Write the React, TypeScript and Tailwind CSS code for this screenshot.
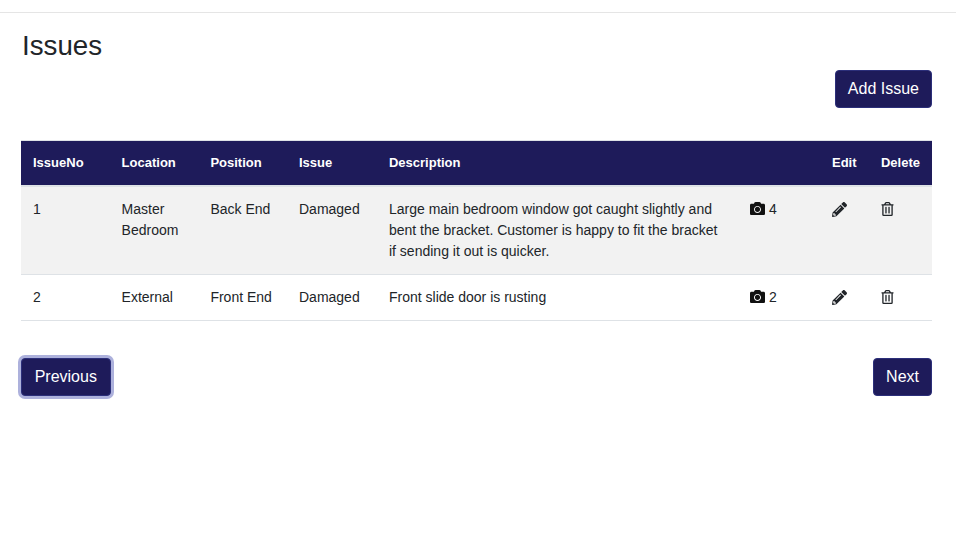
import React from 'react';
import { FaCamera, FaPencilAlt, FaRegTrashAlt } from 'react-icons/fa';

const issues = [
  {
    no: 1,
    location: 'Master Bedroom',
    position: 'Back End',
    issue: 'Damaged',
    description: 'Large main bedroom window got caught slightly and bent the bracket. Customer is happy to fit the bracket if sending it out is quicker.',
    photos: 4,
  },
  {
    no: 2,
    location: 'External',
    position: 'Front End',
    issue: 'Damaged',
    description: 'Front slide door is rusting',
    photos: 2,
  },
];

const btn = 'h-[38px] px-3 rounded border border-[#2c2f7a] bg-[#1e1b5a] text-white text-base';
const th = 'px-3 pt-[11px] pb-3 text-left font-bold border-t border-[#dee2e6]';

export default function App() {
  return (
    <div className="min-h-[536px] bg-white text-[#212529] font-['Liberation_Sans',Arial,sans-serif]">
      <div className="h-[13px] border-b border-[#e5e5e5]" />
      <div className="pl-[21px] pr-6">
        <h1 className="pt-[14px] pl-px text-[27.7px] leading-[38px] font-normal">Issues</h1>
        <div className="mt-[5px] flex justify-end">
          <button className={btn}>Add Issue</button>
        </div>
        <table className="mt-8 w-[911px] table-fixed border-collapse text-sm leading-[21px]">
          <colgroup>
            <col className="w-[88.6px]" />
            <col className="w-[88.8px]" />
            <col className="w-[88.6px]" />
            <col className="w-[90px]" />
            <col className="w-[361px]" />
            <col className="w-[82px]" />
            <col className="w-[49px]" />
            <col className="w-[63px]" />
          </colgroup>
          <thead>
            <tr className="bg-[#1e1b5a] text-white text-[13px] border-b-2 border-[#dee2e6]">
              <th className={th}>IssueNo</th>
              <th className={th}>Location</th>
              <th className={th}>Position</th>
              <th className={th}>Issue</th>
              <th className={th}>Description</th>
              <th className={th} />
              <th className={th}>Edit</th>
              <th className={th}>Delete</th>
            </tr>
          </thead>
          <tbody>
            {issues.map((row, i) => (
              <tr key={row.no} className={`border-b border-[#dee2e6] ${i % 2 === 0 ? 'bg-[#f2f2f2]' : 'bg-white'}`}>
                <td className="p-3 align-top">{row.no}</td>
                <td className="p-3 align-top">{row.location}</td>
                <td className="p-3 align-top">{row.position}</td>
                <td className="p-3 align-top">{row.issue}</td>
                <td className="p-3 align-top">{row.description}</td>
                <td className="p-3 align-top">
                  <span className="flex items-center gap-1">
                    <FaCamera className="-mt-[2px] h-[15px] w-[15px] text-[#111]" />
                    {row.photos}
                  </span>
                </td>
                <td className="p-3 align-top">
                  <FaPencilAlt className="mt-[3px] h-[15px] w-[15px]" />
                </td>
                <td className="p-3 align-top">
                  <FaRegTrashAlt className="mt-[3px] h-[14px] w-[13px]" />
                </td>
              </tr>
            ))}
          </tbody>
        </table>
        <div className="mt-[37px] flex justify-between">
          <button className={`${btn} w-[89.5px] ring-[3px] ring-[#adb1dc]`}>Previous</button>
          <button className={btn}>Next</button>
        </div>
      </div>
    </div>
  );
}
